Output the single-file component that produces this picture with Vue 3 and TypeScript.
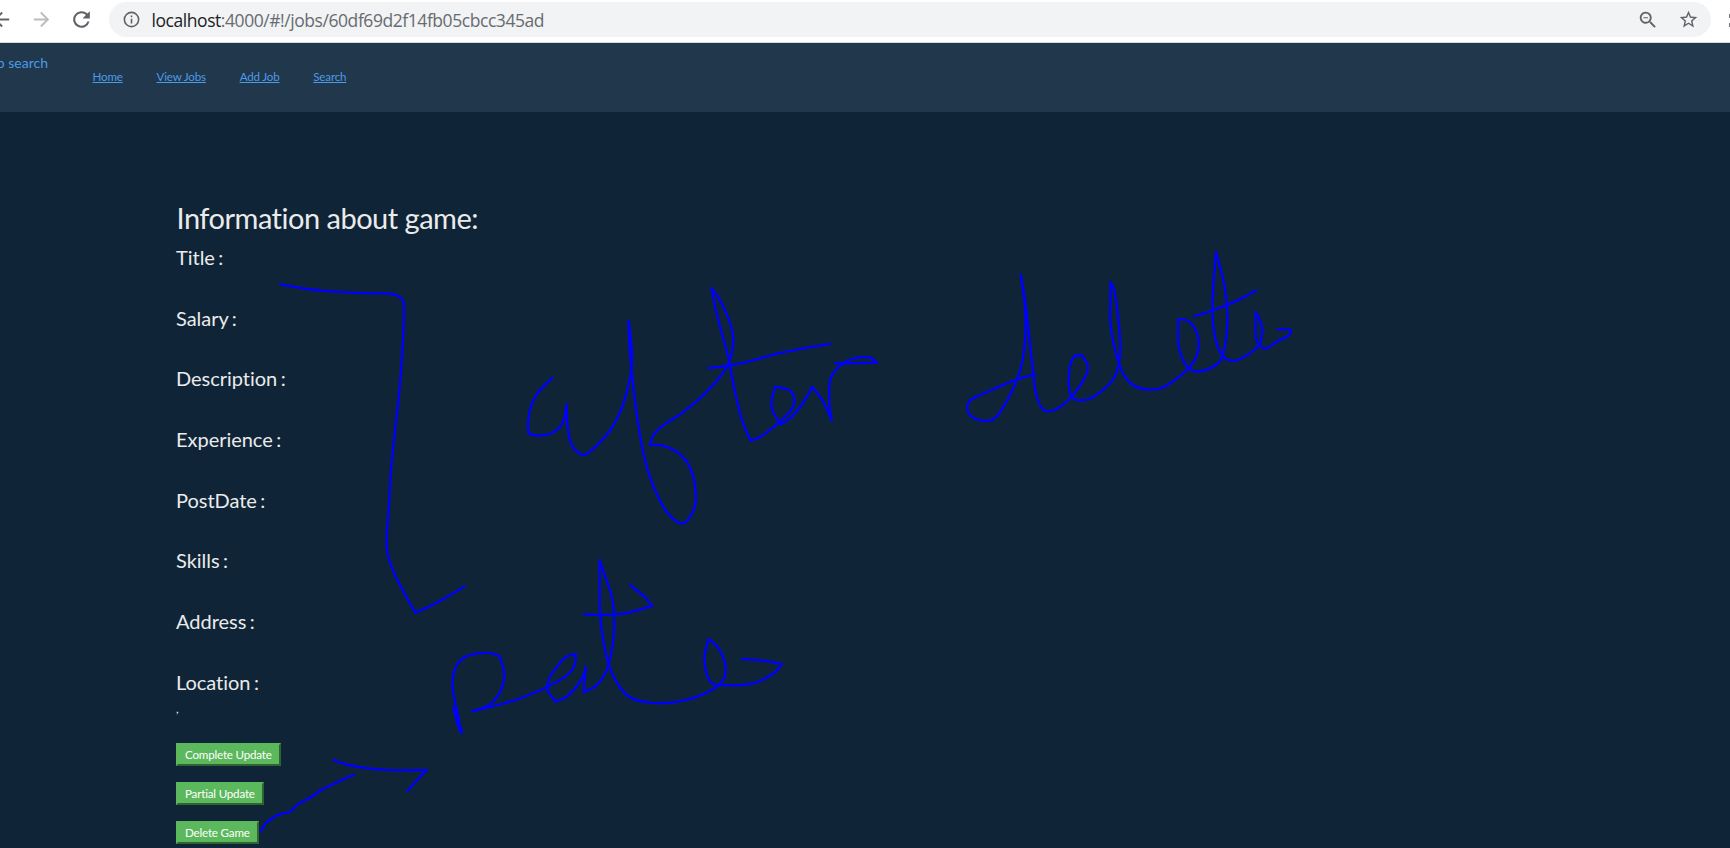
<script setup lang="ts">
type Point = [number, number]
interface Mark {
  x: number
  y: number
  // Each inner list is one smooth run; runs meet at sharp corners.
  runs: Point[][]
}

const links: string[] = ['Home', 'View Jobs', 'Add Job', 'Search']
const fields: string[] = ['Title', 'Salary', 'Description', 'Experience', 'PostDate', 'Skills', 'Address', 'Location']
const actions: string[] = ['Complete Update', 'Partial Update', 'Delete Game']

// Pen marks, in thirds of a pixel from each group's origin.
const marks: Mark[] = [
  {
    x: 260, y: 270,
    runs: [
      [[60, 41], [120, 52], [190, 61], [290, 67], [385, 69], [415, 77], [430, 92], [432, 120], [430, 190], [420, 340], [405, 480], [393, 600], [386, 720], [380, 790], [381, 840], [388, 870], [408, 920], [437, 975], [466, 1027]],
      [[466, 1027], [520, 1002], [570, 974], [614, 947]],
    ],
  },
  {
    x: 500, y: 270,
    runs: [
      [[158, 321], [118, 361], [95, 401], [86, 440], [85, 481], [94, 492], [135, 494], [165, 482], [189, 455], [200, 402]],
      [[200, 402], [201, 445], [209, 507], [222, 533], [247, 553], [274, 540], [330, 480], [362, 420], [384, 350], [395, 285], [395, 230], [386, 151]],
      [[386, 151], [388, 220], [400, 350], [421, 500], [446, 608], [482, 695], [517, 743], [552, 758], [583, 714], [587, 670], [580, 620], [560, 573], [528, 542], [490, 526], [450, 523]],
      [[450, 523], [462, 491], [495, 461], [550, 425], [610, 374], [655, 325], [685, 280], [700, 218], [696, 178], [680, 131], [656, 83], [635, 54]],
      [[635, 54], [650, 130], [672, 210], [687, 270], [702, 350], [724, 443], [752, 511]],
      [[752, 511], [784, 497], [840, 453], [878, 411], [881, 377], [864, 357], [825, 349]],
      [[825, 349], [815, 390], [818, 422], [842, 462]],
      [[842, 462], [874, 440], [908, 399], [937, 349]],
      [[937, 349], [969, 392], [995, 449]],
      [[995, 449], [988, 396], [990, 330], [1005, 301], [1038, 273], [1068, 262], [1110, 261], [1130, 276]],
      [[1130, 276], [1065, 278], [1005, 278]],
      [[625, 293], [690, 285], [750, 272], [830, 250], [920, 232], [992, 220]],
    ],
  },
  {
    x: 940, y: 230,
    runs: [
      [[286, 431], [230, 447], [170, 472], [108, 499], [87, 513], [82, 532], [91, 555], [114, 568], [145, 571], [168, 560], [194, 523], [223, 467], [246, 398], [256, 320], [254, 220], [242, 133]],
      [[242, 133], [255, 210], [269, 330], [282, 450], [291, 501], [309, 537], [328, 542], [358, 531], [396, 497], [431, 448], [444, 410], [427, 375]],
      [[427, 375], [405, 375]],
      [[405, 375], [392, 398], [386, 450], [394, 498], [424, 510], [461, 499], [506, 463], [531, 422], [541, 350], [533, 248], [522, 178], [512, 155]],
      [[512, 155], [511, 270], [523, 348], [546, 422], [571, 458], [603, 474], [656, 475], [698, 453], [750, 409], [773, 367], [773, 314], [754, 279], [735, 267], [715, 267]],
      [[715, 267], [715, 340], [730, 390], [753, 418], [780, 423], [825, 405], [846, 379], [860, 310], [861, 230], [849, 145], [828, 65]],
      [[828, 65], [818, 200], [819, 278], [830, 340], [848, 375], [876, 391], [909, 381], [957, 344], [967, 300], [960, 270], [947, 246]],
      [[947, 246], [948, 322], [959, 345], [978, 354], [1010, 334], [1046, 315], [1052, 300], [1041, 296], [1014, 296]],
      [[763, 257], [820, 239], [890, 211], [948, 180]],
    ],
  },
  {
    x: 430, y: 540,
    runs: [
      [[94, 578], [84, 525], [70, 460], [68, 420], [77, 380], [98, 354], [135, 340], [180, 338], [209, 347]],
      [[209, 347], [223, 399], [214, 446], [181, 491], [127, 512]],
      [[127, 512], [240, 484], [300, 462], [354, 438], [409, 406], [434, 374], [437, 340]],
      [[437, 340], [407, 350], [380, 380], [357, 416], [353, 449], [377, 483]],
      [[377, 483], [411, 468], [446, 429], [465, 395], [467, 380]],
      [[467, 380], [461, 455]],
      [[461, 455], [500, 434], [531, 386], [547, 320], [553, 250], [548, 180], [532, 126], [509, 60]],
      [[509, 60], [510, 210], [520, 300], [537, 374], [568, 438], [605, 473], [665, 487], [735, 485], [815, 463], [875, 426], [887, 382], [876, 342], [859, 315], [836, 296]],
      [[836, 296], [824, 342], [828, 393], [846, 428], [890, 434], [952, 432], [1000, 417], [1037, 393], [1055, 371]],
      [[1055, 371], [1005, 361], [936, 356]],
      [[462, 221], [510, 223], [570, 221], [605, 214], [666, 196]],
      [[666, 196], [644, 169], [600, 133]],
      [[70, 500], [82, 548], [91, 572]],
      [[78, 500], [86, 545], [96, 572]],
    ],
  },
  {
    x: 160, y: 690,
    runs: [
      [[520, 209], [560, 222], [620, 233], [690, 239], [800, 239]],
      [[800, 239], [775, 265], [742, 302]],
      [[302, 422], [320, 396], [346, 377], [366, 369], [390, 364], [415, 340], [450, 322], [480, 301], [530, 276], [582, 252]],
    ],
  },
]

function smooth(points: Point[]): string {
  let d = `M${points[0][0]} ${points[0][1]}`
  for (let i = 0; i < points.length - 1; i++) {
    const a = points[Math.max(0, i - 1)]
    const b = points[i]
    const c = points[i + 1]
    const e = points[Math.min(points.length - 1, i + 2)]
    d += `C${b[0] + (c[0] - a[0]) / 6} ${b[1] + (c[1] - a[1]) / 6} ${c[0] - (e[0] - b[0]) / 6} ${c[1] - (e[1] - b[1]) / 6} ${c[0]} ${c[1]}`
  }
  return d
}
</script>

<template>
  <div class="window">
    <div class="toolbar">
      <svg class="icon back" viewBox="0 0 24 24"><path d="M20 11H7.8l5.6-5.6L12 4l-8 8 8 8 1.4-1.4L7.8 13H20z" /></svg>
      <svg class="icon forward" viewBox="0 0 24 24"><path d="M4 11h12.2l-5.6-5.6L12 4l8 8-8 8-1.4-1.4 5.6-5.6H4z" /></svg>
      <svg class="icon reload" viewBox="0 0 24 24"><path d="M17.65 6.35A8 8 0 1 0 19.73 14h-2.08A6 6 0 1 1 12 6c1.66 0 3.14.69 4.22 1.78L13 11h7V4z" /></svg>
      <div class="address">
        <svg class="info" viewBox="0 0 24 24"><path d="M11 7h2v2h-2zm0 4h2v6h-2zm1-9a10 10 0 1 0 0 20 10 10 0 0 0 0-20zm0 18a8 8 0 1 1 0-16 8 8 0 0 1 0 16z" /></svg>
        <span class="url"><b>localhost</b>:4000/#!/jobs/60df69d2f14fb05cbcc345ad</span>
        <svg class="lens" viewBox="0 0 24 24"><path d="M15.5 14h-.79l-.28-.27a6.5 6.5 0 1 0-.7.7l.27.28v.79l5 4.99L20.49 19zm-6 0a4.5 4.5 0 1 1 0-9 4.5 4.5 0 0 1 0 9zM7 9h5v1H7z" /></svg>
        <svg class="star" viewBox="0 0 24 24"><path d="m22 9.24-7.19-.62L12 2 9.19 8.63 2 9.24l5.46 4.73L5.82 21 12 17.27 18.18 21l-1.63-7.03zM12 15.4l-3.76 2.27 1-4.28-3.32-2.88 4.38-.38L12 6.1l1.71 4.04 4.38.38-3.32 2.88 1 4.28z" /></svg>
      </div>
      <div class="extension"><i></i><i></i></div>
    </div>

    <header class="navbar">
      <span class="brand">Job search</span>
      <nav class="links">
        <a v-for="link in links" :key="link">{{ link }}</a>
      </nav>
    </header>

    <main class="content">
      <h2>Information about game:</h2>
      <h4 v-for="field in fields" :key="field">{{ field }} :</h4>
      <p class="comma">,</p>
      <div class="actions">
        <button v-for="action in actions" :key="action" type="button">{{ action }}</button>
      </div>
    </main>

    <svg class="ink" viewBox="0 0 1730 848">
      <g v-for="(mark, i) in marks" :key="i" :transform="`translate(${mark.x} ${mark.y + 0.5}) scale(.33333)`">
        <path v-for="(run, j) in mark.runs" :key="j" :d="smooth(run)" />
      </g>
    </svg>
  </div>
</template>

<style>
body {
  margin: 0;
  background: #0f2537;
}
</style>

<style scoped>
.window {
  position: relative;
  width: 1730px;
  height: 848px;
  overflow: hidden;
  background: #0f2537;
  color: #ebebeb;
  font-family: Lato, sans-serif;
  font-variant-ligatures: none;
}
.toolbar {
  box-sizing: border-box;
  display: flex;
  align-items: flex-start;
  height: 43px;
  padding-top: 2px;
  background: #fff;
  border-bottom: 1px solid #d5d9dc;
}
.icon {
  flex: none;
  width: 23px;
  height: 23px;
  margin-top: 6px;
  fill: #5f6368;
}
.back { margin-left: -10px; }
.forward { margin-left: 17px; fill: #babcbe; }
.reload { margin-left: 16px; width: 25px; height: 25px; margin-top: 5px; }
.address {
  display: flex;
  flex: none;
  align-items: center;
  box-sizing: border-box;
  width: 1602px;
  height: 35px;
  margin-left: 15px;
  padding: 0 12px 0 13px;
  border-radius: 18px;
  background: #f1f3f4;
}
.address svg {
  flex: none;
  fill: #5f6368;
}
.info { width: 19px; height: 19px; }
.url {
  margin-left: 10.5px;
  color: #686b6f;
  font: 17.5px/34px "Open Sans", sans-serif;
  letter-spacing: -.44px;
  white-space: nowrap;
}
.url b { color: #202124; font-weight: 400; }
.address .lens { width: 22px; height: 22px; margin-left: auto; }
.address .star { width: 21px; height: 21px; margin-left: 19px; }
.extension {
  display: flex;
  flex: none;
  flex-direction: column;
  gap: 5px;
  margin: 12px 0 0 18px;
}
.extension i { width: 4px; height: 4px; background: #777a7e; }
.navbar {
  display: flex;
  height: 69px;
  background: #20374c;
  color: #4c9be8;
}
.brand {
  display: flex;
  justify-content: flex-end;
  width: 48px;
  margin-top: 10px;
  font-size: 14px;
  line-height: 20px;
  white-space: nowrap;
}
.links {
  display: flex;
  gap: 33.8px;
  margin: 25px 0 0 44.5px;
  font-size: 11.6px;
  line-height: 18px;
  letter-spacing: -.18px;
}
.links a { text-decoration: underline; }
.content { padding: 88px 0 0 176px; }
h2 {
  margin: 0 0 7px;
  padding-left: .5px;
  font-size: 29px;
  font-weight: 400;
  line-height: 36px;
  letter-spacing: -.5px;
}
h4 {
  height: 24px;
  margin: 0 0 36.7px;
  font-size: 20px;
  font-weight: 400;
  line-height: 28px;
  word-spacing: -1.6px;
  letter-spacing: -.03px;
}
.comma {
  margin: -28px 0 0;
  height: 16px;
  font-size: 11.6px;
  line-height: 16px;
}
.actions {
  display: flex;
  flex-direction: column;
  align-items: flex-start;
  gap: 16px;
  margin-top: 26.6px;
}
button {
  box-sizing: border-box;
  height: 23px;
  padding: 0 7px;
  border: 2px solid;
  border-color: #5cb85c #306330 #306330 #5cb85c;
  background: #5cb85c;
  color: #fff;
  font: 11.6px/19px Lato, sans-serif;
  font-variant-ligatures: none;
  letter-spacing: -.19px;
}
.ink {
  position: absolute;
  inset: 0;
  width: 1730px;
  height: 848px;
  pointer-events: none;
}
.ink path {
  fill: none;
  stroke: #00f;
  stroke-width: 7;
  stroke-linecap: round;
  stroke-linejoin: round;
}
</style>
